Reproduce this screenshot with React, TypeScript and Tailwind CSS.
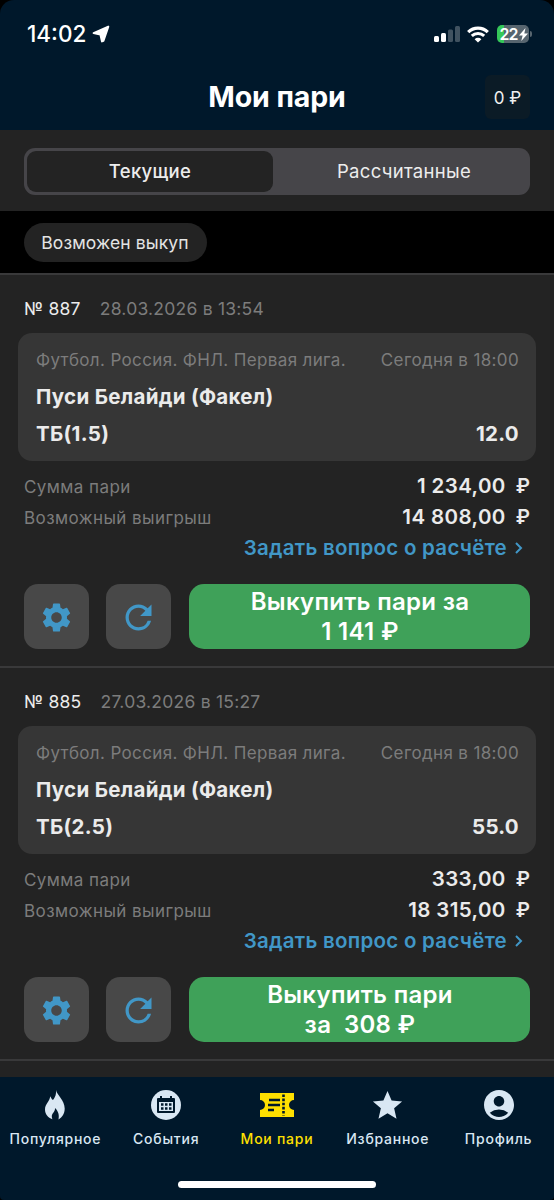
import type { ReactNode } from "react";
import { MdAccountCircle, MdRefresh, MdSettings, MdStar } from "react-icons/md";

type Bet = {
  id: number;
  date: string;
  outcome: string;
  odds: string;
  stake: string;
  payout: string;
  cashout: [string, string];
};

const bets: Bet[] = [
  {
    id: 887,
    date: "28.03.2026 в 13:54",
    outcome: "ТБ(1.5)",
    odds: "12.0",
    stake: "1 234,00",
    payout: "14 808,00",
    cashout: ["Выкупить пари за", "1 141 ₽"],
  },
  {
    id: 885,
    date: "27.03.2026 в 15:27",
    outcome: "ТБ(2.5)",
    odds: "55.0",
    stake: "333,00",
    payout: "18 315,00",
    cashout: ["Выкупить пари", "за  308 ₽"],
  },
];

function StatusBar() {
  return (
    <div className="flex h-[68px] items-center justify-between pl-[27px] pr-[22px] text-white">
      <div className="flex items-center gap-[6px]">
        <span className="pt-px text-[22.5px] font-medium leading-none">14:02</span>
        <svg width="18" height="18" viewBox="0 0 18 18" fill="currentColor">
          <path
            d="M16.300 1.600 1.600 8.100 8.400 9.600 10 16.400 11.400 15.800z"
            stroke="currentColor"
            strokeWidth="2"
            strokeLinejoin="round"
          />
        </svg>
      </div>
      <div className="flex items-center">
        <svg width="26" height="16" viewBox="0 0 26 16" fill="currentColor">
          <rect x="0" y="10" width="5" height="6" rx="1.5" />
          <rect x="7" y="7" width="5" height="9" rx="1.5" />
          <g opacity=".25">
            <rect x="14" y="3.5" width="5" height="12.5" rx="1.5" />
            <rect x="21" y="0" width="5" height="16" rx="1.5" />
          </g>
        </svg>
        <svg className="ml-[7px]" width="22" height="17" viewBox="0 0 22 17" fill="none" stroke="currentColor">
          <path d="M1.2 6.1a14 14 0 0 1 19.6 0" strokeWidth="3.2" />
          <path d="M4.8 9.9a9 9 0 0 1 12.4 0" strokeWidth="3" />
          <path d="M11 16.6 7.6 13.2a4.9 4.9 0 0 1 6.8 0z" fill="currentColor" stroke="none" />
        </svg>
        <div className="ml-[8px] flex h-[18px] w-[32px] items-center justify-center rounded-[5px] bg-[linear-gradient(to_right,#35c759_7.5px,#57656f_7.5px)] pl-[1px]">
          <span className="text-[16px] font-semibold leading-none tracking-[-0.9px]">22</span>
          <svg className="ml-px" width="9" height="13" viewBox="0 0 9 13" fill="currentColor">
            <path d="M6.500 0 0 7.600h3.600L2.300 13 9 5.400H5.300z" />
          </svg>
        </div>
        <div className="ml-[1px] h-[6px] w-[2px] rounded-r-full bg-[#57656f]" />
      </div>
    </div>
  );
}

function Header() {
  return (
    <header className="h-[130px] rounded-t-[14px] bg-[#00182b]">
      <StatusBar />
      <div className="grid h-[58px] grid-cols-[1fr_auto_1fr] items-center pl-[24px] pr-[24px]">
        <h1 className="col-start-2 text-[28.5px] font-bold leading-none tracking-[-0.1px] text-white">
          Мои пари
        </h1>
        <div className="flex h-[44px] w-[45px] items-center justify-center justify-self-end rounded-[6px] bg-[#0b1b26] pt-[3px] text-[17px] text-[#f0f0f0]">
          0 ₽
        </div>
      </div>
    </header>
  );
}

function Tabs() {
  return (
    <div className="h-[81px] bg-[#232323] px-[24px] pt-[18px]">
      <div className="flex h-[47px] rounded-[11px] bg-[#464549] p-[3px] text-[18.5px] tracking-[0.3px] text-[#ededed]">
        <button className="w-[246px] rounded-[9px] bg-[#232323] pt-px font-medium">Текущие</button>
        <button className="flex-1 pl-[8px] pt-px">Рассчитанные</button>
      </div>
    </div>
  );
}

function Filters() {
  return (
    <div className="h-[62px] bg-black px-[24px] pt-[12px]">
      <button className="h-[39px] w-[183px] rounded-full bg-[#232323] pt-px pr-px text-[17.5px] tracking-[0.12px] text-[#e4e4e4]">
        Возможен выкуп
      </button>
    </div>
  );
}

function IconButton({ children }: { children: ReactNode }) {
  return (
    <button className="flex size-[65px] items-center justify-center rounded-[14px] bg-[#484848] pt-px text-[#4197c7]">
      {children}
    </button>
  );
}

function Amount({ label, value }: { label: string; value: string }) {
  return (
    <div className="flex h-[31px] items-center justify-between">
      <span className="pt-[2px] text-[17px] tracking-[0.42px] text-[#7c7c7c]">{label}</span>
      <span className="flex items-baseline gap-[10px] text-[20.5px] font-semibold text-[#ebebeb]">
        <span className="tracking-[0.4px]">{value}</span>
        <span className="text-[19.5px]">₽</span>
      </span>
    </div>
  );
}

function BetCard({ bet }: { bet: Bet }) {
  return (
    <article className="h-[393px] border-t-2 border-[#39393a] bg-[#232323] px-[18px] pt-[21px]">
      <div className="flex h-[26px] items-center gap-[19px] px-[6px] text-[17.5px] tracking-[0.23px]">
        <span className="text-[#ececec]">№ {bet.id}</span>
        <span className="text-[#7c7c7c]">{bet.date}</span>
      </div>
      <section className="mt-[11px] h-[128px] rounded-[14px] bg-[#363636] px-[18px] pt-[16px] text-[20.5px] font-bold tracking-[0.3px] text-[#ebebeb]">
        <div className="flex h-[24px] items-center justify-between whitespace-nowrap text-[17px] font-normal tracking-[0.36px] text-[#7c7c7c]">
          <span>Футбол. Россия. ФНЛ. Первая лига.</span>
          <span className="-mr-px">Сегодня в 18:00</span>
        </div>
        <div className="mt-[6px] flex h-[37px] items-center">Пуси Белайди (Факел)</div>
        <div className="flex h-[37px] items-center justify-between">
          <span>{bet.outcome}</span>
          <span className="-mr-px">{bet.odds}</span>
        </div>
      </section>
      <div className="mt-[10px] px-[6px]">
        <Amount label="Сумма пари" value={bet.stake} />
        <Amount label="Возможный выигрыш" value={bet.payout} />
        <a className="flex h-[31px] items-center justify-end gap-[8px] pr-[7px] text-[20.5px] font-semibold tracking-[0.27px] text-[#4197c7]">
          Задать вопрос о расчёте
          <svg className="-mt-px" width="8" height="12" viewBox="0 0 8 12" fill="none" stroke="currentColor" strokeWidth="2">
            <path d="m1 1 5 5-5 5" />
          </svg>
        </a>
      </div>
      <div className="mt-[20px] flex px-[6px]">
        <IconButton>
          <MdSettings size={35} className="-ml-px" />
        </IconButton>
        <div className="ml-[17px]">
          <IconButton>
            <MdRefresh size={39} />
          </IconButton>
        </div>
        <button className="ml-[18px] flex h-[65px] flex-1 flex-col items-center justify-center whitespace-pre rounded-[15px] bg-[#3fa159] pl-px text-[24px] font-semibold leading-[30px] tracking-[0.3px] text-white">
          <span>{bet.cashout[0]}</span>
          <span>{bet.cashout[1]}</span>
        </button>
      </div>
    </article>
  );
}

function FlameIcon() {
  return (
    <svg width="20" height="30" viewBox="0 0 20 30" fill="currentColor">
      <path d="M11 0c.8 5 8.700 10 8.700 18.500 0 5-2.300 8.800-6.200 10.900.8-3.900.2-8-3.500-11.500.3 4.200-3.200 5-3.200 8.400 0 1.100.2 2 .6 2.900C3 27.700 0 24 0 19.500 0 14 4.800 11.600 5.200 6.300l2 3.500 1.300-.3C10.400 6.500 11.400 4 11 0z" />
    </svg>
  );
}

function CalendarIcon() {
  return (
    <svg width="30" height="30" viewBox="0 0 30 30" fill="currentColor">
      <circle cx="15" cy="15" r="15" />
      <g fill="#00182b">
        <rect x="6" y="8" width="18" height="15" rx="1" />
        <rect x="9" y="6" width="2" height="3" />
        <rect x="19" y="6" width="2" height="3" />
      </g>
      <path d="M8 12h14v9H8z" />
      <path d="M10 14.500h10.500M10 18.500h10.500" stroke="#00182b" strokeWidth="2.500" strokeDasharray="2.500 1.500" />
    </svg>
  );
}

function TicketIcon() {
  return (
    <svg width="34" height="24" viewBox="0 0 34 24" fill="currentColor">
      <path d="M0 0h34v7a5 5 0 0 0 0 10v7H0v-7a5 5 0 0 0 0-10z" />
      <g stroke="#00182b" fill="none" strokeWidth="2.400">
        <path d="M9 7h11M8 12h12M8 17h6" />
        <path d="M23.500 1.500v21" strokeWidth="2.600" strokeDasharray="2.600 1.500" />
      </g>
    </svg>
  );
}

const navItems = [
  { label: "Популярное", icon: <FlameIcon /> },
  { label: "События", icon: <CalendarIcon /> },
  { label: "Мои пари", icon: <TicketIcon />, active: true },
  { label: "Избранное", icon: <MdStar size={35} /> },
  { label: "Профиль", icon: <MdAccountCircle size={36} /> },
];

function BottomNav() {
  return (
    <nav className="flex h-[123px] flex-none flex-col items-center rounded-b-[4px] bg-[#00182b]">
      <div className="grid w-full grid-cols-5 pt-[9px]">
        {navItems.map((item) => (
          <div
            key={item.label}
            className={`flex flex-col items-center ${item.active ? "text-[#ffe000]" : "text-[#d9e7f3]"}`}
          >
            <div className="flex h-[38px] items-center">{item.icon}</div>
            <span className="mt-[5px] text-[14px] font-medium leading-[20px] tracking-[0.75px]">
              {item.label}
            </span>
          </div>
        ))}
      </div>
      <div className="mt-[32px] h-[7px] w-[198px] rounded-full bg-white" />
    </nav>
  );
}

export default function App() {
  return (
    <div className="flex h-[1200px] w-[554px] flex-col overflow-hidden bg-black font-['Inter',sans-serif]">
      <Header />
      <Tabs />
      <Filters />
      <main className="flex-1 overflow-hidden bg-[#232323]">
        {bets.map((bet) => (
          <BetCard key={bet.id} bet={bet} />
        ))}
        <div className="h-[18px] border-t-2 border-[#39393a]" />
      </main>
      <BottomNav />
    </div>
  );
}
